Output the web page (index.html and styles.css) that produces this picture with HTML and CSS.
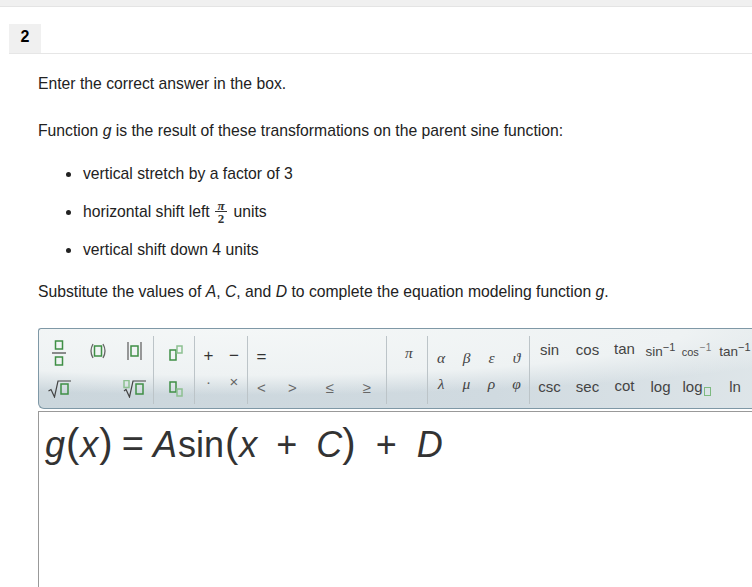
FILE: index.html
```html
<!DOCTYPE html>
<html lang="en">
<head>
  <meta charset="UTF-8" />
  <title>Question 2</title>
  <link rel="stylesheet" href="styles.css">
</head>
<body>
  <div class="topbar"></div>

  <div class="question-head">
    <div class="question-num">2</div>
  </div>

  <div class="question">
    <p class="lead">Enter the correct answer in the box.</p>
    <p class="intro">Function <i>g</i> is the result of these transformations on the parent sine function:</p>
    <ul class="steps">
      <li>vertical stretch by a factor of 3</li>
      <li>horizontal shift left
        <span class="frac"><span class="frac-top">π</span><span class="frac-bottom">2</span></span>
        units</li>
      <li>vertical shift down 4 units</li>
    </ul>
    <p class="ask">Substitute the values of <i>A</i>, <i>C</i>, and <i>D</i> to complete the equation modeling function <i>g</i>.</p>

    <div class="toolbar">
      <div class="group group-struct">
        <span class="btn">
          <svg width="14" height="26" viewBox="0 0 14 26">
            <rect x="3.5" y="1" width="7" height="8" class="ph" />
            <path d="M0 13 H14" class="ink" />
            <rect x="3.5" y="17" width="7" height="8" class="ph" />
          </svg>
        </span>
        <span class="btn btn-up">
          <svg width="18" height="16" viewBox="0 0 18 16">
            <path d="M4 1 Q0 8 4 15 M14 1 Q18 8 14 15" class="ink-soft" />
            <rect x="5.5" y="3" width="7" height="10" class="ph" />
          </svg>
        </span>
        <span class="btn btn-up">
          <svg width="15" height="18" viewBox="0 0 15 18">
            <path d="M1 0 V18 M14 0 V18" class="ink-soft" />
            <rect x="4" y="4" width="7" height="10" class="ph" />
          </svg>
        </span>
        <span class="btn btn-down">
          <svg width="23" height="18" viewBox="0 0 23 18">
            <path d="M0.5 11 L3 9.5 L6.5 17 L10 1 H23" class="ink" />
            <rect x="13" y="4" width="7" height="10" class="ph" />
          </svg>
        </span>
        <span class="btn"></span>
        <span class="btn btn-down">
          <svg width="23" height="18" viewBox="0 0 23 18">
            <rect x="1" y="0.5" width="5" height="7" class="ph-light" />
            <path d="M1 11 L3 9.5 L6.5 17 L10 1 H23" class="ink" />
            <rect x="13" y="4" width="7" height="10" class="ph" />
          </svg>
        </span>
      </div>

      <div class="group group-script">
        <span class="btn">
          <svg width="14" height="16" viewBox="0 0 14 16">
            <rect x="1" y="5" width="6" height="10" class="ph" />
            <rect x="8" y="1" width="5" height="7" class="ph-light" />
          </svg>
        </span>
        <span class="btn btn-down">
          <svg width="14" height="16" viewBox="0 0 14 16">
            <rect x="1" y="1" width="6" height="10" class="ph" />
            <rect x="8" y="8" width="5" height="7" class="ph-light" />
          </svg>
        </span>
      </div>

      <div class="group group-ops">
        <span class="sym sym-big">+</span><span class="sym sym-big">−</span>
        <span class="sym sym-soft">·</span><span class="sym sym-soft">×</span>
      </div>

      <div class="group group-rel">
        <span class="sym sym-big">=</span><span></span><span></span><span></span>
        <span class="sym sym-soft">&lt;</span><span class="sym sym-soft">&gt;</span>
        <span class="sym sym-soft">≤</span><span class="sym sym-soft">≥</span>
      </div>

      <div class="group group-pi">
        <span class="sym greek">π</span>
      </div>

      <div class="group group-greek">
        <span class="sym greek">α</span><span class="sym greek">β</span><span class="sym greek">ε</span><span class="sym greek">ϑ</span>
        <span class="sym greek">λ</span><span class="sym greek">μ</span><span class="sym greek">ρ</span><span class="sym greek">φ</span>
      </div>

      <div class="group group-func">
        <span class="fn">sin</span>
        <span class="fn">cos</span>
        <span class="fn fn-up">tan</span>
        <span class="fn fn-small">sin<sup>−1</sup></span>
        <span class="fn fn-tiny">cos<sup>−1</sup></span>
        <span class="fn fn-small">tan<sup>−1</sup></span>
        <span class="fn">csc</span>
        <span class="fn">sec</span>
        <span class="fn fn-up">cot</span>
        <span class="fn">log</span>
        <span class="fn">log<span class="ph-box"></span></span>
        <span class="fn">ln</span>
      </div>
    </div>

    <div class="editor">
      <div class="equation">
        <i>g</i><span class="paren">(</span><i>x</i><span class="paren">)</span><span class="eq">=</span><i>A</i><span class="sin">sin</span><span class="paren">(</span><i>x</i><span class="plus">+</span><i>C</i><span class="paren paren-close">)</span><span class="plus">+</span><i class="last">D</i>
      </div>
    </div>
  </div>
</body>
</html>
```

FILE: styles.css
```css
html, body {
  height: 100%;
}

body {
  margin: 0;
  font-family: "Liberation Sans", Arial, sans-serif;
  font-size: 15.72px;
  color: #222;
  background: #fff;
  overflow: hidden;
}

.topbar {
  height: 6px;
  background: #f0f0f0;
  border-bottom: 1px solid #e4e4e4;
}

.question-head {
  margin: 17px 0 0 9px;
  border-bottom: 1px solid #e6e6e6;
}

.question-num {
  width: 32px;
  height: 29px;
  line-height: 26px;
  background: #f0f0f0;
  color: #000;
  font-size: 16px;
  font-weight: bold;
  text-align: center;
}

.question {
  padding: 20px 0 0 38px;
}

.question p {
  margin: 0;
  line-height: 20px;
}

.intro {
  padding-top: 27px;
}

.steps {
  margin: 22px 0 0;
  padding: 0 0 0 45px;
  line-height: 20px;
}

.steps li {
  height: 20px;
  margin-bottom: 18px;
}

.steps li::marker {
  font-size: 18px;
}

.ask {
  padding-top: 5px;
}

.frac {
  display: inline-flex;
  flex-direction: column;
  align-items: center;
  vertical-align: middle;
  width: 12px;
  margin: 0 2px 0 1px;
  font-family: "Liberation Serif", serif;
  font-size: 13px;
  font-weight: bold;
  line-height: 10px;
  color: #333;
}

.frac-top {
  font-style: italic;
  border-bottom: 1px solid #333;
  width: 100%;
  text-align: center;
}

.frac-bottom {
  line-height: 13px;
  font-size: 13px;
}

/* toolbar */
.toolbar {
  display: flex;
  width: 760px;
  height: 81px;
  margin-top: 26px;
  box-sizing: border-box;
  padding-top: 7px;
  border: 1px solid #7f98a6;
  border-right: none;
  border-radius: 3px 0 0 6px;
  background:
    radial-gradient(ellipse 640px 66px at 200px 0, #f4f7f7 0, #eef2f3 70%, rgba(238, 242, 243, 0) 100%),
    linear-gradient(to right, #cbd6dc, #d0dae0 60%, #e0e7ea);
}

.group {
  display: grid;
  box-sizing: border-box;
  height: 68px;
  border-left: 1px solid #bcc4c8;
  grid-auto-rows: 34px;
  justify-items: center;
  align-items: center;
}

.group-struct {
  width: 114px;
  border-left: none;
  grid-template-columns: 40px 37px 37px;
}

.group-script {
  width: 41px;
  grid-template-columns: 44px;
}

.group-ops {
  width: 53px;
  padding-top: 7px;
  grid-template-columns: 27px 24px;
  grid-template-rows: 25px 27px;
}

.group-rel {
  width: 139px;
  padding-top: 7px;
  grid-template-columns: 27px 35px 39px 35px;
  grid-template-rows: 27px 36px;
}

.group-pi {
  width: 41px;
  grid-template-columns: 44px;
}

.group-greek {
  width: 102px;
  padding-top: 9px;
  grid-template-columns: 26px 25px 25px 25px;
  grid-auto-rows: 26px;
}

.group-func {
  width: 231px;
  grid-template-columns: 39px 37px 37px 35px 37px 40px;
  grid-template-rows: 26px 48px;
}

.btn {
  display: flex;
  align-items: center;
  justify-content: center;
}

.btn-up {
  margin-bottom: 5px;
}

.btn-down {
  margin-top: 4px;
}

svg {
  display: block;
  fill: none;
}

.ph {
  stroke: #3f8f45;
  stroke-width: 1.5;
}

.ph-light {
  stroke: #8cc090;
  stroke-width: 1.5;
}

.ink {
  stroke: #444;
  stroke-width: 1.2;
}

.ink-soft {
  stroke: #666;
  stroke-width: 1.3;
}

.sym {
  font-size: 15px;
  line-height: 20px;
  color: #333;
}

.sym-big {
  font-size: 17px;
}

.sym-soft {
  color: #666;
}

.greek {
  font-family: "Liberation Serif", serif;
  font-style: italic;
  font-size: 15.5px;
  color: #444;
}

.fn {
  font-size: 15px;
  color: #444;
  white-space: nowrap;
}

.fn-up {
  margin-bottom: 2px;
}

.fn-small {
  font-size: 13.5px;
  margin-top: 5px;
}

.fn-tiny {
  font-size: 11px;
  margin-top: 6px;
}

.fn sup {
  font-size: 11px;
  line-height: 0;
}

.fn-tiny sup {
  font-size: 10px;
  color: #777;
  margin-left: 1px;
}

.ph-box {
  display: inline-block;
  width: 5px;
  height: 7px;
  margin-bottom: -4px;
  margin-left: 1px;
  border: 1px solid #7dba80;
}

/* answer box */
.editor {
  height: 300px;
  margin-top: 2px;
  border-top: 1px solid #999;
  border-left: 1px solid #999;
}

.equation {
  padding: 5px 0 0 6px;
  font-size: 36px;
  line-height: 52px;
  color: #333;
  white-space: nowrap;
}

.paren {
  font-size: 40px;
  font-weight: 400;
  margin: 0 1px;
}

.eq {
  display: inline-block;
  margin: 0 9px 0 8px;
  font-size: 38px;
  line-height: 30px;
}

.sin {
  margin-left: 1px;
}

.plus {
  margin: 0 19px;
}

.paren-close {
  margin-left: 0;
}

.last {
  margin-left: 1px;
}
```
